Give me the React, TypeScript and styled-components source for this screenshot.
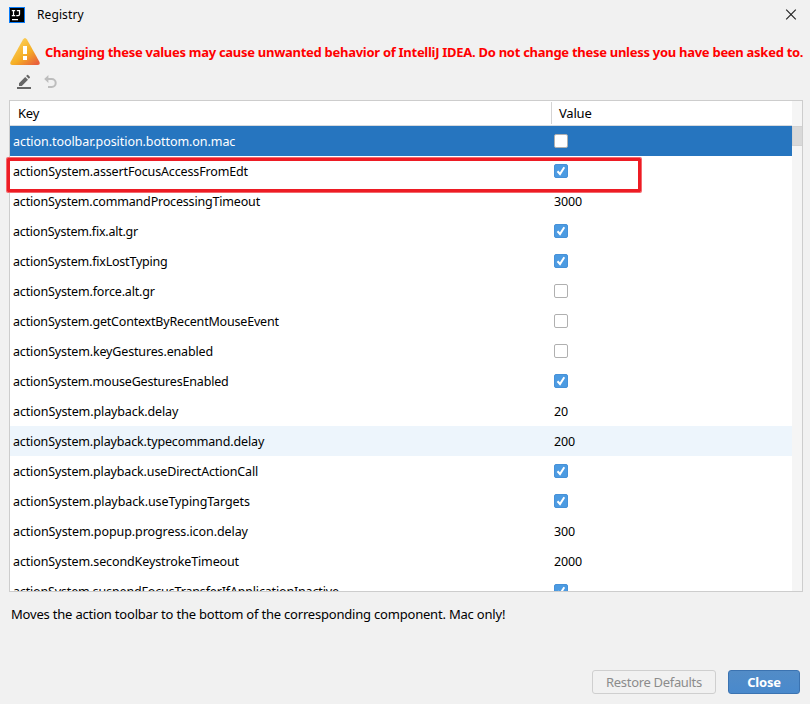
import React from "react";
import styled, { createGlobalStyle } from "styled-components";

const GlobalStyle = createGlobalStyle`
  * { box-sizing: border-box; }
  body { margin: 0; background: #f1f1f1; overflow: hidden; }
`;

const Dialog = styled.main`
  display: flex;
  flex-direction: column;
  width: 810px;
  height: 704px;
  overflow: hidden;
  background: #f1f1f1;
  color: #000;
  font: 13px/18px "Noto Sans", "Open Sans", sans-serif;
  white-space: nowrap;
`;

const TitleBar = styled.header`
  display: flex;
  align-items: center;
  height: 29px;
  padding: 0 13px 0 9px;
  flex: none;
`;

const Title = styled.span`
  flex: 1;
  margin-left: 12px;
  font-size: 12px;
  letter-spacing: 0.1px;
  padding-top: 1px;
`;

const Warning = styled.div`
  display: flex;
  align-items: center;
  height: 44px;
  padding-left: 9px;
  gap: 4px;
  flex: none;
`;

const WarningText = styled.strong`
  color: #ff0000;
  font: bold 13px/18px "Noto Sans", sans-serif;
  letter-spacing: -0.28px;
  padding-top: 1px;
`;

const Toolbar = styled.div`
  display: flex;
  gap: 10px;
  height: 27px;
  padding: 1px 0 0 16px;
  flex: none;
`;

const TableArea = styled.section`
  position: relative;
  display: flex;
  flex: none;
  width: 794px;
  height: 492px;
  margin-left: 9px;
  border: 1px solid #cdcdcd;
  background: #fff;
`;

const Grid = styled.div`
  width: 782px;
  overflow: hidden;
`;

const HeadRow = styled.div`
  display: grid;
  grid-template-columns: 541px 1fr;
  align-items: center;
  height: 25px;
  border-bottom: 1px solid #d6dade;
`;

const HeadCell = styled.div<{ $divided?: boolean }>`
  height: 22px;
  padding-left: ${(p) => (p.$divided ? 7 : 8)}px;
  line-height: 23px;
  letter-spacing: -0.2px;
  border-left: ${(p) => (p.$divided ? "1px solid #d4d4d4" : "none")};
`;

const Row = styled.div<{ $tone?: "selected" | "hover" }>`
  display: grid;
  grid-template-columns: 541px 1fr;
  align-items: center;
  height: 30px;
  padding-left: 3px;
  color: ${(p) => (p.$tone === "selected" ? "#fff" : "#000")};
  background: ${(p) => (p.$tone === "selected" ? "#2675bf" : p.$tone === "hover" ? "#edf5fc" : "#fff")};
`;

const Label = styled.span<{ $spacing: number }>`
  padding-top: 2px;
  font-size: 12.5px;
  letter-spacing: ${(p) => p.$spacing}px;
`;

const CheckBox = styled.span<{ $checked: boolean }>`
  display: flex;
  width: 14px;
  height: 14px;
  border: 1px solid ${(p) => (p.$checked ? "#4691d8" : "#b0b0b0")};
  border-radius: 2px;
  background: ${(p) => (p.$checked ? "#4c9be2" : "#fff")};
`;

const Track = styled.div`
  width: 10px;
  padding-top: 25px;
  background: #f5f5f5;
`;

const Thumb = styled.div`
  height: 20px;
  border: 1px solid #d2d2d2;
  border-right: 0;
  background: #d9d9d9;
`;

const Highlight = styled.div`
  position: absolute;
  left: -3px;
  top: 57px;
  width: 634px;
  height: 34px;
  border: 3px solid #ed1c24;
  border-radius: 1px;
  box-shadow: 0 0 0 1px #f4686d;
`;

const Description = styled.p`
  margin: 13px 0 0 11px;
  letter-spacing: -0.2px;
`;

const Footer = styled.footer`
  display: flex;
  justify-content: flex-end;
  gap: 12px;
  margin-top: auto;
  padding: 0 10px 10px 0;
`;

const Button = styled.button<{ $primary?: boolean }>`
  width: ${(p) => (p.$primary ? 72 : 124)}px;
  height: 24px;
  padding: 0;
  border: 1px solid ${(p) => (p.$primary ? "#3b73b1" : "#cfcfcf")};
  border-radius: 3px;
  color: ${(p) => (p.$primary ? "#fff" : "#8c8c8c")};
  background: ${(p) => (p.$primary ? "linear-gradient(#528cc7, #4989cc)" : "#f1f1f1")};
  font: ${(p) => (p.$primary ? "bold" : "normal")} 13px/20px "Noto Sans", sans-serif;
  letter-spacing: ${(p) => (p.$primary ? -0.2 : -0.32)}px;
`;

type Entry = { key: string; value: boolean | string; spacing: number; tone?: "selected" | "hover" };

const entries: Entry[] = [
  { key: "action.toolbar.position.bottom.on.mac", value: false, spacing: -0.06, tone: "selected" },
  { key: "actionSystem.assertFocusAccessFromEdt", value: true, spacing: -0.14 },
  { key: "actionSystem.commandProcessingTimeout", value: "3000", spacing: -0.18 },
  { key: "actionSystem.fix.alt.gr", value: true, spacing: -0.23 },
  { key: "actionSystem.fixLostTyping", value: true, spacing: -0.21 },
  { key: "actionSystem.force.alt.gr", value: false, spacing: -0.17 },
  { key: "actionSystem.getContextByRecentMouseEvent", value: false, spacing: -0.19 },
  { key: "actionSystem.keyGestures.enabled", value: false, spacing: -0.15 },
  { key: "actionSystem.mouseGesturesEnabled", value: true, spacing: -0.18 },
  { key: "actionSystem.playback.delay", value: "20", spacing: -0.11 },
  { key: "actionSystem.playback.typecommand.delay", value: "200", spacing: -0.14, tone: "hover" },
  { key: "actionSystem.playback.useDirectActionCall", value: true, spacing: -0.14 },
  { key: "actionSystem.playback.useTypingTargets", value: true, spacing: -0.09 },
  { key: "actionSystem.popup.progress.icon.delay", value: "300", spacing: -0.08 },
  { key: "actionSystem.secondKeystrokeTimeout", value: "2000", spacing: -0.12 },
  { key: "actionSystem.suspendFocusTransferIfApplicationInactive", value: true, spacing: -0.16 },
];

const AppLogo = () => (
  <svg width="16" height="16" viewBox="0 0 16 16">
    <rect width="16" height="16" fill="#087cfa" />
    <rect x="1" y="1" width="14" height="14" fill="#000" />
    <path d="M2.8 3.5h3.4M4.5 3.5v5M2.8 8.5h3.4M7.8 3.5h2.7v3.7q0 1.3-1.3 1.3H7.3M3 12.5h6" fill="none" stroke="#fff" strokeWidth="1.25" />
  </svg>
);

const CloseIcon = () => (
  <svg width="12" height="12" viewBox="0 0 12 12">
    <path d="M1.2 .7l9.6 9.6M10.8 .7L1.2 10.3" stroke="#222" strokeWidth="1.15" />
  </svg>
);

const WarningIcon = () => (
  <svg width="32" height="32" viewBox="0 0 32 32">
    <defs>
      <linearGradient id="amber" x1="8" y1="5" x2="27" y2="29" gradientUnits="userSpaceOnUse">
        <stop stopColor="#fbd05c" />
        <stop offset=".55" stopColor="#f5ae24" />
        <stop offset="1" stopColor="#e9613c" />
      </linearGradient>
    </defs>
    <path d="M14 4.5Q16 1.5 18 4.5L30.5 27Q31.5 30 28.5 30H3.5Q.5 30 1.5 27Z" fill="url(#amber)" />
    <path d="M14 11h4v8h-4zM14 21h4v4h-4z" fill="#fff" />
  </svg>
);

const EditIcon = () => (
  <svg width="16" height="16" viewBox="0 0 16 16">
    <path d="M3 9.2l6.2-6.2 2.8 2.8L5.8 12H3zM10.1 2.1l1-1q.5-.5 1 0L13.8 2.8q.5.5 0 1l-1 1zM1 13h14v2H1z" fill="#666" />
  </svg>
);

const UndoIcon = () => (
  <svg width="16" height="16" viewBox="0 0 16 16">
    <path d="M4.5 5h5.2a4 4 0 010 8H6" fill="none" stroke="#bdbdbd" strokeWidth="2" />
    <path d="M2.2 5L6.4 1v8z" fill="#bdbdbd" />
  </svg>
);

const Check = () => (
  <svg width="12" height="12" viewBox="0 0 12 12">
    <path d="M2.5 6.3l2.5 2.7 4.3-6.7" fill="none" stroke="#fff" strokeWidth="2" />
  </svg>
);

export default function App() {
  return (
    <Dialog>
      <GlobalStyle />
      <TitleBar>
        <AppLogo />
        <Title>Registry</Title>
        <CloseIcon />
      </TitleBar>
      <Warning>
        <WarningIcon />
        <WarningText>
          Changing these values may cause unwanted behavior of IntelliJ IDEA. Do not change these unless you have been asked to.
        </WarningText>
      </Warning>
      <Toolbar>
        <EditIcon />
        <UndoIcon />
      </Toolbar>
      <TableArea>
        <Grid>
          <HeadRow>
            <HeadCell>Key</HeadCell>
            <HeadCell $divided>Value</HeadCell>
          </HeadRow>
          {entries.map((e) => (
            <Row key={e.key} $tone={e.tone}>
              <Label $spacing={e.spacing}>{e.key}</Label>
              {typeof e.value === "string" ? (
                <Label $spacing={-0.15}>{e.value}</Label>
              ) : (
                <CheckBox $checked={e.value}>{e.value && <Check />}</CheckBox>
              )}
            </Row>
          ))}
        </Grid>
        <Track>
          <Thumb />
        </Track>
        <Highlight />
      </TableArea>
      <Description>Moves the action toolbar to the bottom of the corresponding component. Mac only!</Description>
      <Footer>
        <Button disabled>Restore Defaults</Button>
        <Button $primary>Close</Button>
      </Footer>
    </Dialog>
  );
}
